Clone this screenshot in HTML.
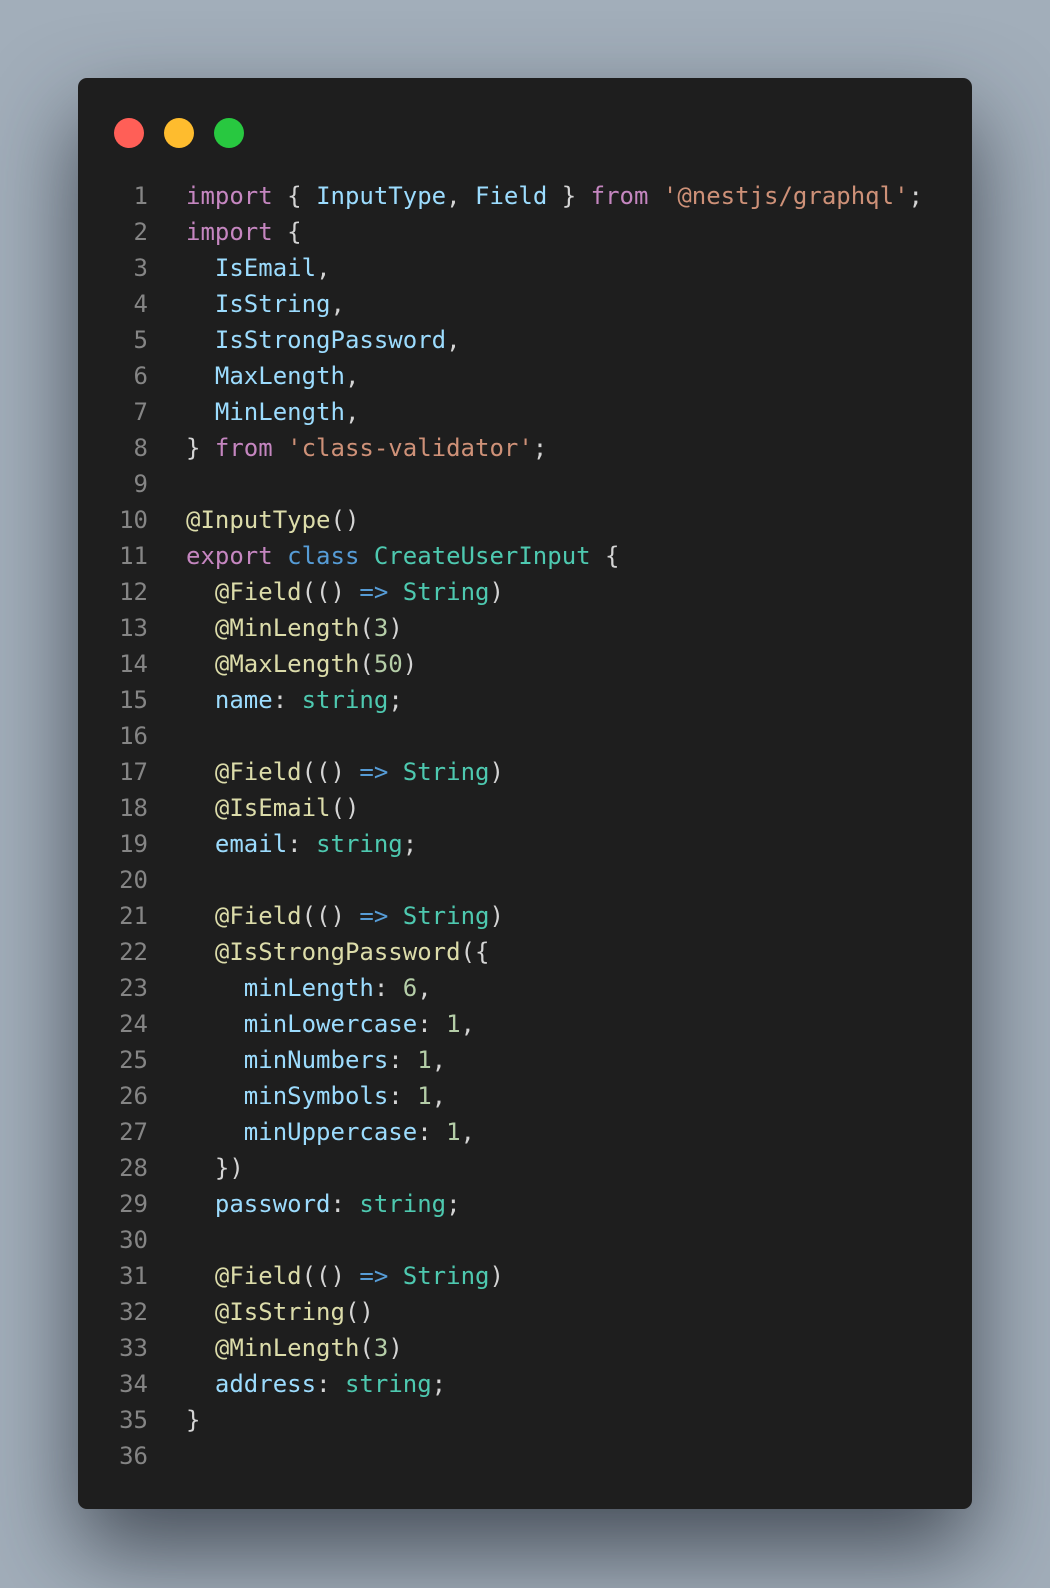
<!DOCTYPE html><html><head><style>
body{margin:0;width:1050px;height:1588px;background:#a2aeba;position:relative;overflow:hidden}
.win{position:absolute;left:78px;top:78px;width:894px;height:1431px;background:#1e1e1e;border-radius:9px;box-shadow:0 40px 90px rgba(30,35,45,.7)}
.d{position:absolute;top:118px;width:30px;height:30px;border-radius:50%}
pre{position:absolute;left:78px;top:178px;margin:0;font:24px/36px "DejaVu Sans Mono","Liberation Mono",monospace;color:#d4d4d4}
.n{display:inline-block;width:70px;text-align:right;color:#858585;margin-right:38px}
.k{color:#c586c0}.v{color:#9cdcfe}.s{color:#ce9178}.t{color:#4ec9b0}.f{color:#dcdcaa}.m{color:#b5cea8}.b{color:#569cd6}
</style></head><body>
<div class="win"></div>
<div class="d" style="left:114px;background:#ff5f57"></div>
<div class="d" style="left:164px;background:#febc2e"></div>
<div class="d" style="left:214px;background:#28c840"></div>
<pre><span class="n">1</span><span class="k">import</span> { <span class="v">InputType</span>, <span class="v">Field</span> } <span class="k">from</span> <span class="s">'@nestjs/graphql'</span>;
<span class="n">2</span><span class="k">import</span> {
<span class="n">3</span>  <span class="v">IsEmail</span>,
<span class="n">4</span>  <span class="v">IsString</span>,
<span class="n">5</span>  <span class="v">IsStrongPassword</span>,
<span class="n">6</span>  <span class="v">MaxLength</span>,
<span class="n">7</span>  <span class="v">MinLength</span>,
<span class="n">8</span>} <span class="k">from</span> <span class="s">'class-validator'</span>;
<span class="n">9</span>
<span class="n">10</span><span class="f">@InputType</span>()
<span class="n">11</span><span class="k">export</span> <span class="b">class</span> <span class="t">CreateUserInput</span> {
<span class="n">12</span>  <span class="f">@Field</span>(() <span class="b">=&gt;</span> <span class="t">String</span>)
<span class="n">13</span>  <span class="f">@MinLength</span>(<span class="m">3</span>)
<span class="n">14</span>  <span class="f">@MaxLength</span>(<span class="m">50</span>)
<span class="n">15</span>  <span class="v">name</span>: <span class="t">string</span>;
<span class="n">16</span>
<span class="n">17</span>  <span class="f">@Field</span>(() <span class="b">=&gt;</span> <span class="t">String</span>)
<span class="n">18</span>  <span class="f">@IsEmail</span>()
<span class="n">19</span>  <span class="v">email</span>: <span class="t">string</span>;
<span class="n">20</span>
<span class="n">21</span>  <span class="f">@Field</span>(() <span class="b">=&gt;</span> <span class="t">String</span>)
<span class="n">22</span>  <span class="f">@IsStrongPassword</span>({
<span class="n">23</span>    <span class="v">minLength</span>: <span class="m">6</span>,
<span class="n">24</span>    <span class="v">minLowercase</span>: <span class="m">1</span>,
<span class="n">25</span>    <span class="v">minNumbers</span>: <span class="m">1</span>,
<span class="n">26</span>    <span class="v">minSymbols</span>: <span class="m">1</span>,
<span class="n">27</span>    <span class="v">minUppercase</span>: <span class="m">1</span>,
<span class="n">28</span>  })
<span class="n">29</span>  <span class="v">password</span>: <span class="t">string</span>;
<span class="n">30</span>
<span class="n">31</span>  <span class="f">@Field</span>(() <span class="b">=&gt;</span> <span class="t">String</span>)
<span class="n">32</span>  <span class="f">@IsString</span>()
<span class="n">33</span>  <span class="f">@MinLength</span>(<span class="m">3</span>)
<span class="n">34</span>  <span class="v">address</span>: <span class="t">string</span>;
<span class="n">35</span>}
<span class="n">36</span>
</pre>
</body></html>
